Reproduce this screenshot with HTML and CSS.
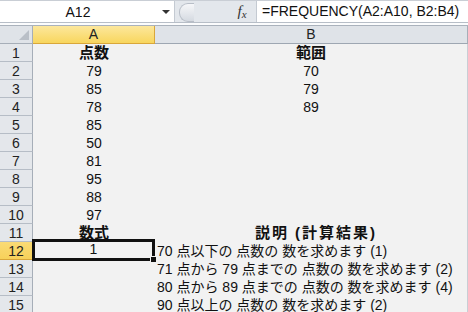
FILE: index.html
```html
<!DOCTYPE html>
<html lang="ja">
<head>
<meta charset="UTF-8" />
<meta name="viewport" content="width=device-width, initial-scale=1" />
<title>FREQUENCY</title>
<link rel="stylesheet" href="styles.css">
</head>
<body>

<div class="formula-bar">
  <div class="name-box">
    <span class="name">A12</span>
    <span class="arrow"></span>
  </div>
  <div class="grip"></div>
  <div class="fx"><i>f</i><i class="x">x</i></div>
  <div class="formula">=FREQUENCY(A2:A10, B2:B4)</div>
</div>
<div class="bar-gap"></div>

<div class="sheet">
  <div class="corner"><span class="tri"></span></div>
  <div class="col-head active">A</div>
  <div class="col-head">B</div>

  <div class="row-head">1</div>
  <div class="cell center bold">点数</div>
  <div class="cell center bold">範囲</div>

  <div class="row-head">2</div>
  <div class="cell center">79</div>
  <div class="cell center">70</div>

  <div class="row-head">3</div>
  <div class="cell center">85</div>
  <div class="cell center">79</div>

  <div class="row-head">4</div>
  <div class="cell center">78</div>
  <div class="cell center">89</div>

  <div class="row-head">5</div>
  <div class="cell center">85</div>
  <div class="cell"></div>

  <div class="row-head">6</div>
  <div class="cell center">50</div>
  <div class="cell"></div>

  <div class="row-head">7</div>
  <div class="cell center">81</div>
  <div class="cell"></div>

  <div class="row-head">8</div>
  <div class="cell center">95</div>
  <div class="cell"></div>

  <div class="row-head">9</div>
  <div class="cell center">88</div>
  <div class="cell"></div>

  <div class="row-head">10</div>
  <div class="cell center">97</div>
  <div class="cell"></div>

  <div class="row-head">11</div>
  <div class="cell center bold">数式</div>
  <div class="cell center bold wide">説明 (計算結果)</div>

  <div class="row-head active">12</div>
  <div class="cell center selected">1<span class="handle"></span></div>
  <div class="cell">70 点以下の 点数の 数を求めます (1)</div>

  <div class="row-head">13</div>
  <div class="cell"></div>
  <div class="cell">71 点から 79 点までの 点数の 数を求めます (2)</div>

  <div class="row-head">14</div>
  <div class="cell"></div>
  <div class="cell">80 点から 89 点までの 点数の 数を求めます (4)</div>

  <div class="row-head">15</div>
  <div class="cell"></div>
  <div class="cell">90 点以上の 点数の 数を求めます (2)</div>
</div>

</body>
</html>
```

FILE: styles.css
```css
html, body {
  margin: 0; padding: 0;
  width: 468px; height: 312px;
  overflow: hidden;
  background: #f2f2f2;
  font-family: "Liberation Sans", "Noto Sans CJK JP", sans-serif;
  font-size: 14px;
  color: #111;
}

/* formula bar */
.formula-bar {
  display: flex;
  height: 21px;
  background: #e3e7ec;
  border-top: 1px solid #c9ced5;
  border-bottom: 1px solid #b7bec7;
}

.name-box {
  width: 174px;
  display: flex;
  align-items: center;
  background: #fff;
  border-right: 1px solid #c4cad2;
}
.name-box .name {
  flex: 1;
  text-align: center;
  padding-right: 6px;
}
.name-box .arrow {
  width: 0; height: 0;
  margin-right: 4px;
  border-left: 4px solid transparent;
  border-right: 4px solid transparent;
  border-top: 4px solid #333;
}

.grip {
  width: 14px;
  height: 17px;
  margin: 2px 0 0 4px;
  border-radius: 9px 0 0 9px;
  background: linear-gradient(#f6f7f9, #d5dae1);
  border: 1px solid #b8bec7;
  border-right: none;
}

.fx {
  width: 28px;
  margin-left: 34px;
  display: flex;
  align-items: center;
  justify-content: center;
  font-family: "Liberation Serif", serif;
  font-size: 15px;
  color: #333;
}
.fx .x { font-size: 11px; margin-top: 4px; }

.formula {
  flex: 1;
  background: #fff;
  border-left: 1px solid #c4cad2;
  padding-left: 5px;
  font-size: 14px;
  line-height: 21px;
  white-space: nowrap;
}

.bar-gap {
  height: 2px;
  background: #fbfcfd;
  border-bottom: 1px solid #aab2bc;
}

/* sheet */
.sheet {
  display: grid;
  grid-template-columns: 33px 122px 311px 2px;
  grid-auto-rows: 18px;
}

.corner {
  position: relative;
  background: #dfe3e8;
  border-right: 1px solid #a6aeb8;
  border-bottom: 1px solid #a6aeb8;
  box-sizing: border-box;
}
.corner .tri {
  position: absolute;
  right: 3px; bottom: 3px;
  width: 0; height: 0;
  border-left: 10px solid transparent;
  border-bottom: 10px solid #b9bfc7;
}

.col-head {
  background: #dfe3e8;
  border-right: 1px solid #b6bdc6;
  border-bottom: 1px solid #9ea7b2;
  box-sizing: border-box;
  text-align: center;
  line-height: 17px;
  color: #222;
}
.col-head:nth-child(3) { grid-column: span 2; border-right: 1px solid #a6aeb8; }
.col-head.active {
  background: linear-gradient(#fce79c, #f8d65e);
  border-right: 1px solid #d9a73a;
  border-bottom: 1px solid #d9a73a;
}

.row-head {
  grid-column: 1;
  background: #e4e7eb;
  border-right: 1px solid #a6aeb8;
  border-bottom: 1px solid #b6bdc6;
  box-sizing: border-box;
  text-align: center;
  line-height: 18px;
  color: #222;
}
.row-head.active {
  background: linear-gradient(#fadb75, #f7d15a);
  border-bottom: 1px solid #d9a73a;
}

.cell {
  line-height: 18px;
  white-space: nowrap;
  padding-left: 2px;
  box-sizing: border-box;
  position: relative;
}
.cell:nth-child(3n) {
  grid-column: span 2;
  border-right: 1px solid #c9ced5;
}
.cell.center { text-align: center; padding-left: 0; }
.cell.bold { font-weight: bold; font-size: 15px; }
.cell.wide { letter-spacing: 2px; padding-left: 10px; }

.cell.selected {
  margin: -3px 0 -1px -1px;
  border: 3px solid #111;
  line-height: 15px;
  background: #f2f2f2;
  z-index: 2;
}
.handle {
  position: absolute;
  right: -5px; bottom: -5px;
  width: 5px; height: 5px;
  background: #111;
  border: 1px solid #f2f2f2;
}
```
